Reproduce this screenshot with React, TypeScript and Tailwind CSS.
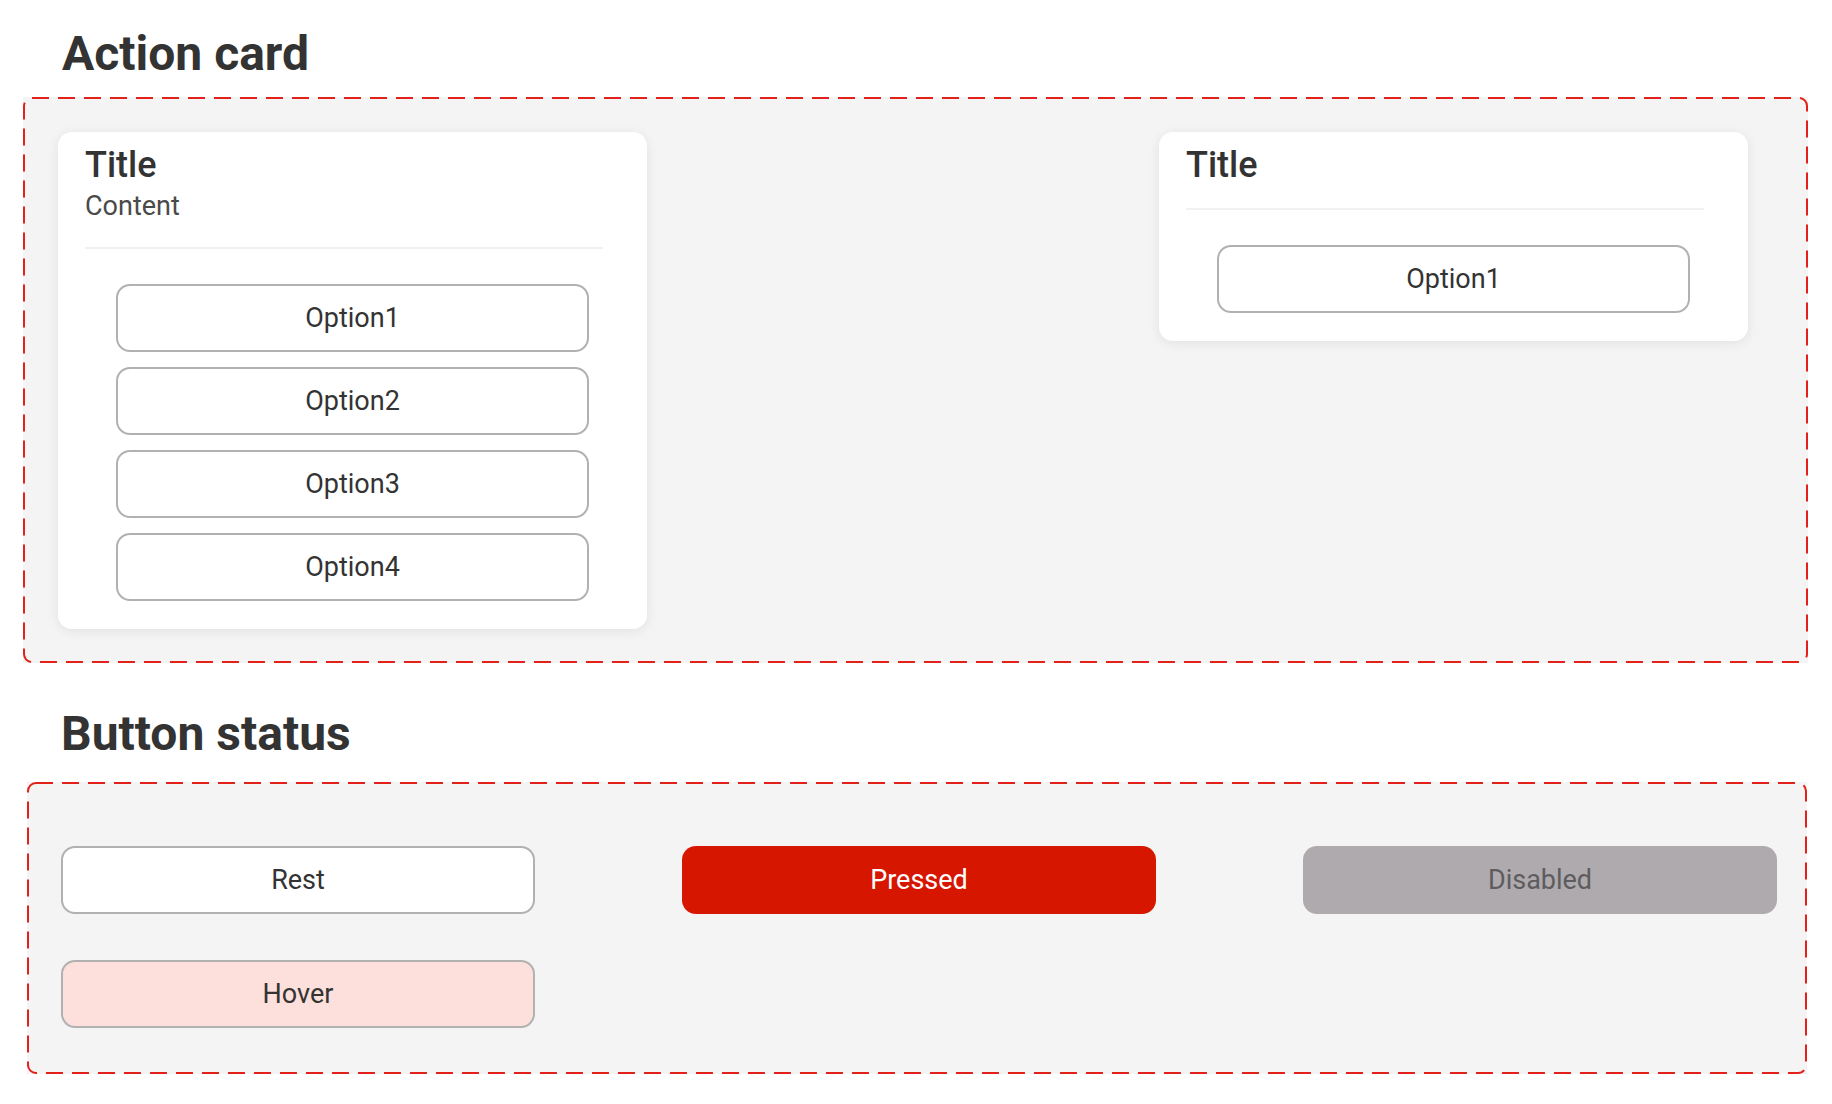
const options = ['Option1', 'Option2', 'Option3', 'Option4'];

function DashedFrame() {
  return (
    <svg className="pointer-events-none absolute inset-0 h-full w-full" aria-hidden="true">
      <rect
        x="1"
        y="1"
        rx="8"
        ry="8"
        fill="none"
        stroke="#e3211b"
        strokeWidth="2"
        strokeDasharray="17 9"
        style={{ width: 'calc(100% - 2px)', height: 'calc(100% - 2px)' }}
      />
    </svg>
  );
}

function OptionButton({ label }: { label: string }) {
  return (
    <button
      type="button"
      className="mx-auto flex h-[68px] w-[473px] items-center justify-center rounded-[14px] border-2 border-[#b1b1b1] bg-white text-[27px] text-[#333]"
    >
      {label}
    </button>
  );
}

function ActionCard({ title, content, items }: { title: string; content?: string; items: string[] }) {
  return (
    <div className="w-[589px] rounded-[14px] bg-white px-[27px] pt-[12px] pb-[28px] shadow-[0_2px_12px_rgba(0,0,0,0.08)]">
      <h3 className="text-[36px] leading-[42px] font-medium text-[#333]">{title}</h3>
      {content && <p className="mt-[5px] text-[27px] leading-[30px] text-[#4a4a4a]">{content}</p>}
      <div className={`${content ? 'mt-[26px]' : 'mt-[22px]'} h-[2px] w-[518px] bg-[#f1f1f1]`} />
      <div className="mt-[35px] flex flex-col gap-[15px]">
        {items.map((item) => (
          <OptionButton key={item} label={item} />
        ))}
      </div>
    </div>
  );
}

export default function App() {
  return (
    <div className="min-h-screen bg-white pb-[30px] font-['Roboto','Liberation_Sans',sans-serif]">
      <h2 className="ml-[62px] pt-[26px] text-[48px] leading-[56px] font-bold text-[#333]">Action card</h2>

      <div className="relative mt-[15px] mr-[24px] ml-[23px] flex h-[566px] items-start justify-between bg-[#f4f4f4] pt-[35px] pr-[60px] pl-[35px]">
        <DashedFrame />
        <ActionCard title="Title" content="Content" items={options} />
        <ActionCard title="Title" items={['Option1']} />
      </div>

      <h2 className="mt-[43px] ml-[61px] text-[48px] leading-[56px] font-bold text-[#333]">Button status</h2>

      <div className="relative mt-[20px] mr-[25px] ml-[27px] grid grid-cols-[474px_474px_474px] gap-x-[147px] gap-y-[46px] bg-[#f4f4f4] pt-[64px] pb-[46px] pl-[34px]">
        <DashedFrame />
        <button
          type="button"
          className="flex h-[68px] items-center justify-center rounded-[14px] border-2 border-[#b1b1b1] bg-white text-[27px] text-[#333]"
        >
          Rest
        </button>
        <button
          type="button"
          className="flex h-[68px] items-center justify-center rounded-[14px] bg-[#d71600] text-[27px] text-white"
        >
          Pressed
        </button>
        <button
          type="button"
          disabled
          className="flex h-[68px] items-center justify-center rounded-[14px] bg-[#aeaaad] text-[27px] text-[#5e5c5e]"
        >
          Disabled
        </button>
        <button
          type="button"
          className="flex h-[68px] items-center justify-center rounded-[14px] border-2 border-[#b1b1b1] bg-[#fde0db] text-[27px] text-[#333]"
        >
          Hover
        </button>
      </div>
    </div>
  );
}
